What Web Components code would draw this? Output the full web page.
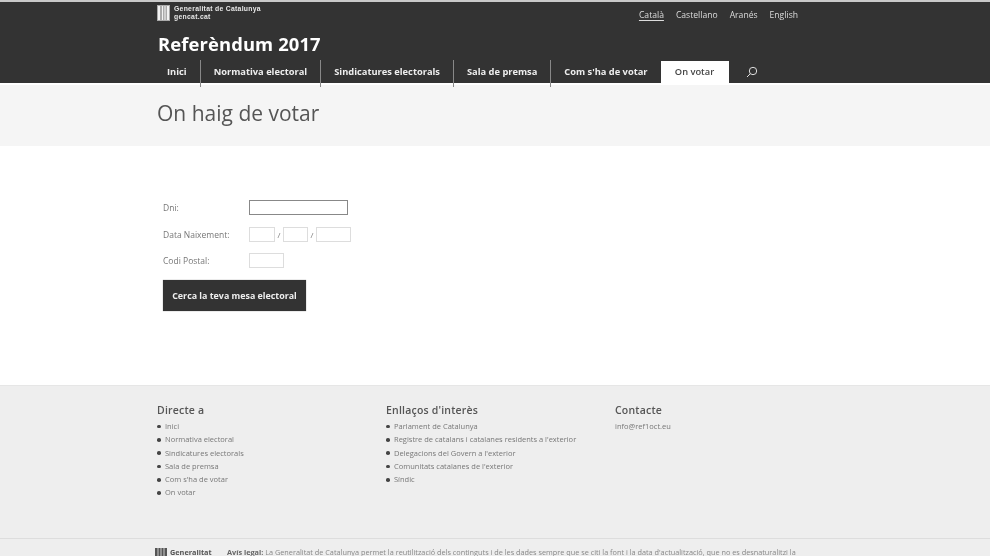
<!DOCTYPE html>
<html lang="ca">
<head>
<meta charset="utf-8">
<title>Referèndum 2017</title>
<style>
  html, body { margin: 0; padding: 0; background: #fff; }
  body { font-family: "Open Sans", "Liberation Sans", sans-serif; height: 556px; overflow: hidden; filter: blur(.45px); }
</style>
</head>
<body>
<site-header></site-header>
<page-title>On haig de votar</page-title>
<vote-form></vote-form>
<site-footer></site-footer>

<script>
  class SiteHeader extends HTMLElement {
    constructor() {
      super();
      this.attachShadow({ mode: 'open' });
      const tabs = ['Inici', 'Normativa electoral', 'Sindicatures electorals', 'Sala de premsa', "Com s'ha de votar"];
      this.shadowRoot.innerHTML = `
        <style>
          :host { display: block; background: #333; border-top: 2px solid #c9c9c9; height: 81px; color: #fff; }
          .wrap { box-sizing: border-box; height: 100%; padding-left: 157px; width: 798px; display: flex; flex-direction: column; }
          .top { display: flex; justify-content: space-between; height: 30px; }
          .logo { display: flex; gap: 4px; padding-top: 3px; }
          .logo svg { display: block; }
          .logo div { font: 700 6.800px/8px "Liberation Sans", sans-serif; letter-spacing: .3px; color: #e8e8e8; }
          .langs { display: flex; gap: 12px; font-size: 8.6px; line-height: 12px; padding-top: 7px; color: #ddd; }
          .langs u { text-underline-offset: 2px; }
          h1 { margin: 0; font-size: 18.4px; line-height: 24px; font-weight: 700; padding-left: 1px; height: 29px; letter-spacing: .12px; }
          nav { display: flex; height: 22px; font-size: 9.3px; line-height: 22px; font-weight: 700; color: #eee; }
          nav span { box-sizing: border-box; padding: 1px 13px 0; border-left: 1px solid #888; height: 27px; margin-top: -1px; }
          nav span:first-child { border: 0; padding: 1px 13px 0 10px; }
          nav .on { background: #fff; color: #444; border: 0; font-weight: 600; width: 68px; height: 22px; padding: 0; margin-top: 0; text-align: center; }
          nav svg { margin: 5px 0 0 17px; }
        </style>
        <div class="wrap">
          <div class="top">
            <div class="logo">
              <svg width="13" height="16" viewBox="0 0 13 16"><rect width="13" height="16" fill="#aaa"/><path d="M1 1h2v14H1zM5 1h1v14H5zM7.500 1h1v14h-1zM10 1h2v14h-2z" fill="#f2f2f2"/></svg>
              <div>Generalitat de Catalunya<br>gencat.cat</div>
            </div>
            <div class="langs"><u>Català</u><span>Castellano</span><span>Aranés</span><span>English</span></div>
          </div>
          <h1>Referèndum 2017</h1>
          <nav>
            ${tabs.map(t => `<span>${t}</span>`).join('')}
            <span class="on">On votar</span>
            <svg width="12" height="12" viewBox="0 0 12 12" fill="none" stroke="#ddd" stroke-width="1"><circle cx="7" cy="5" r="3.700"/><path d="M4.300 7.700 1 11"/></svg>
          </nav>
        </div>`;
    }
  }

  class PageTitle extends HTMLElement {
    constructor() {
      super();
      this.attachShadow({ mode: 'open' });
      this.shadowRoot.innerHTML = `
        <style>
          :host { display: block; background: #f5f5f5; height: 63px; box-sizing: border-box; padding: 13px 0 0 157px; color: #555; font-size: 21px; line-height: 30px; border-top: 2px solid #fff; }
        </style>
        <slot></slot>`;
    }
  }

  class VoteForm extends HTMLElement {
    constructor() {
      super();
      this.attachShadow({ mode: 'open' });
      this.shadowRoot.innerHTML = `
        <style>
          :host { display: block; height: 239px; box-sizing: border-box; padding: 54px 0 0 163px; font-size: 8.5px; color: #777; }
          .row { display: flex; align-items: center; height: 15px; margin-bottom: 11.500px; }
          label { width: 86px; }
          i { display: block; box-sizing: border-box; height: 15px; border: 1px solid #ddd; background: #fff; }
          .sep { width: 8px; text-align: center; font-size: 8px; }
          .dni { width: 99px; border-color: #888; }
          button { display: block; width: 143px; height: 31px; background: #333; color: #eee; border: 0; padding: 0; font: 700 8.9px "Open Sans", sans-serif; box-shadow: 0 0 1px #888; }
        </style>
        <div class="row"><label>Dni:</label><i class="dni"></i></div>
        <div class="row"><label>Data Naixement:</label><i style="width:26px"></i><span class="sep">/</span><i style="width:25px"></i><span class="sep">/</span><i style="width:35px"></i></div>
        <div class="row"><label>Codi Postal:</label><i style="width:35px"></i></div>
        <button>Cerca la teva mesa electoral</button>`;
    }
  }

  class SiteFooter extends HTMLElement {
    constructor() {
      super();
      this.attachShadow({ mode: 'open' });
      const col = (title, items) => `
        <section>
          <h3>${title}</h3>
          <ul>${items.map(t => `<li>${t}</li>`).join('')}</ul>
        </section>`;
      this.shadowRoot.innerHTML = `
        <style>
          :host { display: block; background: #eee; height: 171px; overflow: hidden; color: #777; border-top: 1px solid #e6e6e6; box-sizing: border-box; }
          .cols { display: grid; grid-template-columns: 229px 229px 220px; padding: 17px 0 0 157px; height: 152px; box-sizing: border-box; }
          h3 { margin: 0 0 3px; font-size: 10.5px; line-height: 14px; font-weight: 600; color: #555; letter-spacing: .2px; }
          ul { margin: 0; padding: 0; list-style: none; font-size: 7.5px; line-height: 13.300px; }
          li { display: flex; align-items: center; gap: 4.500px; }
          li::before { content: ""; width: 3.500px; height: 3.500px; border-radius: 50%; background: #444; }
          p { margin: 0; font-size: 7.5px; line-height: 13.300px; }
          .legal { border-top: 1px solid #ddd; padding: 8px 0 0 155px; display: flex; white-space: nowrap; font-size: 7.300px; line-height: 10px; color: #888; }
          .brand { width: 72px; display: flex; gap: 3px; font-weight: 700; color: #555; }
          .brand svg { margin-top: 1px; }
          b { color: #666; }
        </style>
        <div class="cols">
          ${col('Directe a', ['Inici', 'Normativa electoral', 'Sindicatures electorals', 'Sala de premsa', "Com s'ha de votar", 'On votar'])}
          ${col("Enllaços d'interès", ['Parlament de Catalunya', "Registre de catalans i catalanes residents a l'exterior", "Delegacions del Govern a l'exterior", "Comunitats catalanes de l'exterior", 'Síndic'])}
          <section><h3>Contacte</h3><p>info@ref1oct.eu</p></section>
        </div>
        <div class="legal">
          <div class="brand"><svg width="12" height="8" viewBox="0 0 12 8"><rect width="12" height="8" fill="#555"/><path d="M3 0v8M6 0v8M9 0v8" stroke="#ccc"/></svg>Generalitat</div>
          <div><b>Avís legal:</b> La Generalitat de Catalunya permet la reutilització dels continguts i de les dades sempre que se citi la font i la data d'actualització, que no es desnaturalitzi la</div>
        </div>`;
    }
  }

  customElements.define('site-header', SiteHeader);
  customElements.define('page-title', PageTitle);
  customElements.define('vote-form', VoteForm);
  customElements.define('site-footer', SiteFooter);
</script>
</body>
</html>
